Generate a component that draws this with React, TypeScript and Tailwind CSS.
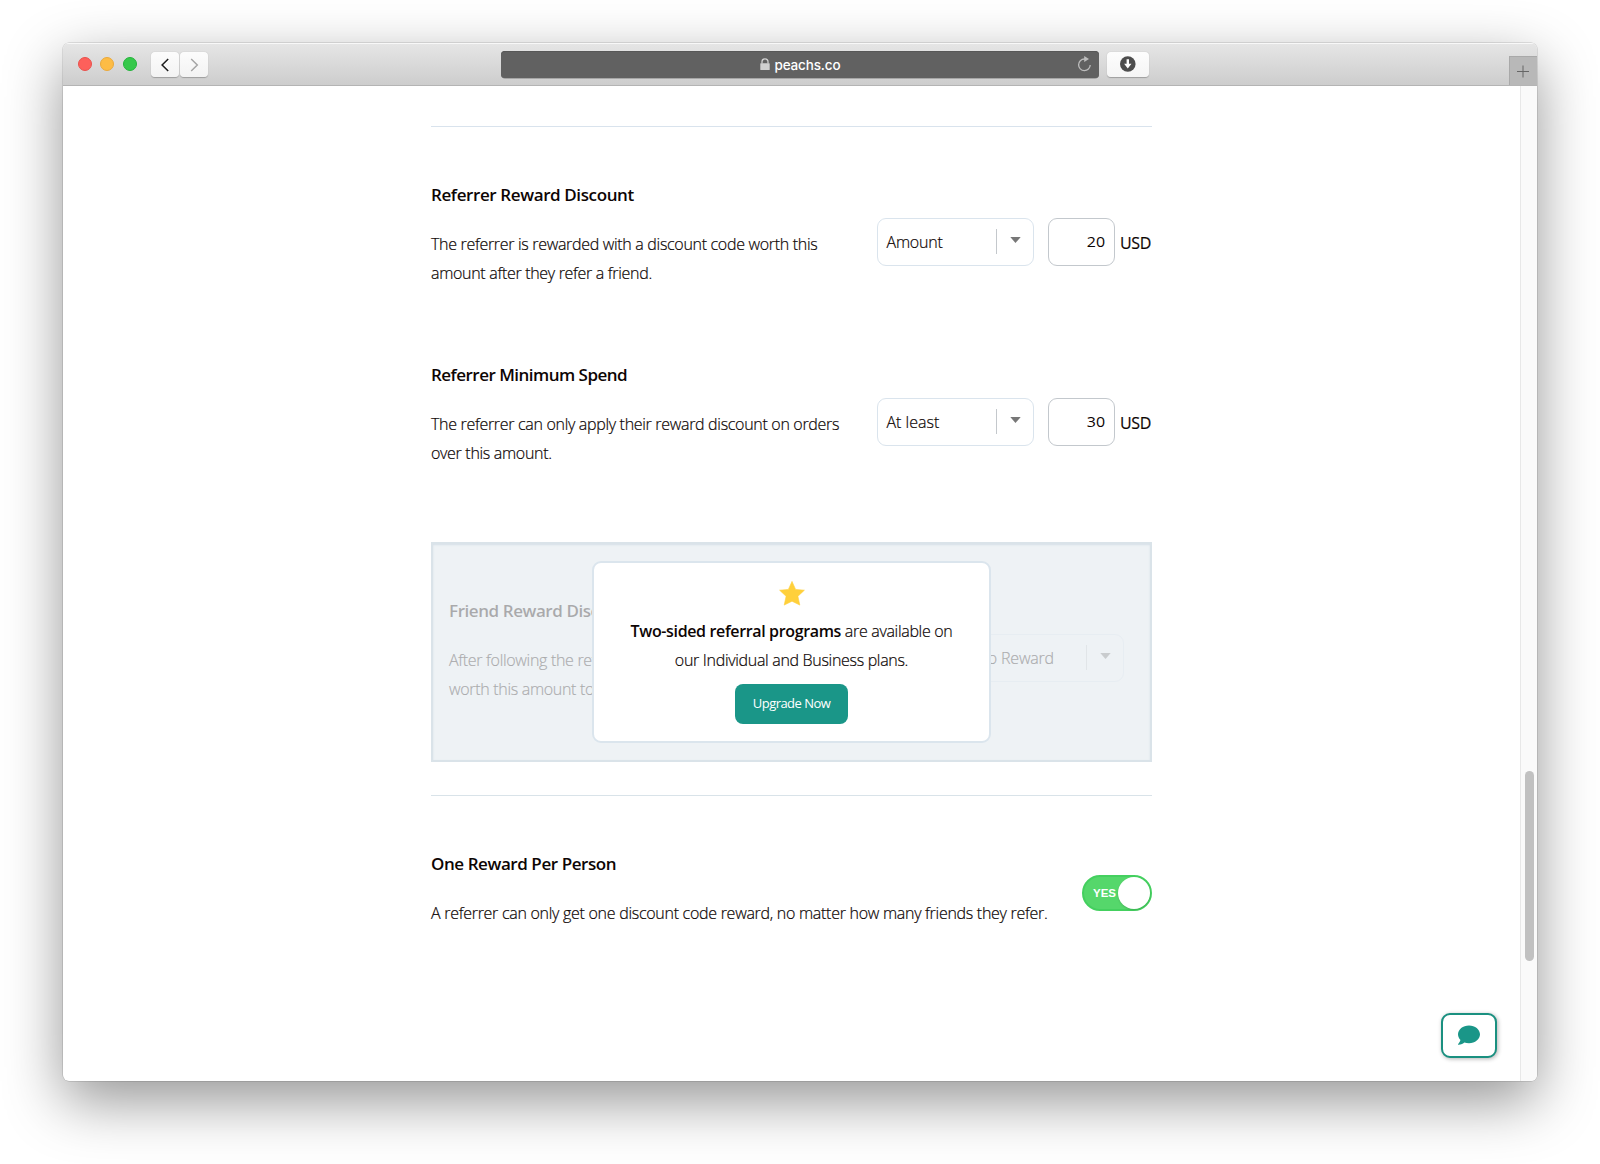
import type { ReactNode } from 'react';
import { FaComment } from 'react-icons/fa';

function SelectBox({ label, tracking }: { label: string; tracking: string }) {
  return (
    <div className="flex h-12 w-[157px] shrink-0 items-center rounded-[9px] border border-[#dae4ed] pl-[8.5px]">
      <span className={`flex-1 whitespace-nowrap pb-px text-[16px] font-light leading-6 [-webkit-text-stroke:0.2px] ${tracking}`}>{label}</span>
      <span className="mb-px h-[25px] w-px bg-[#c4c8cc]" />
      <svg className="mb-[4px] ml-[13.5px] mr-[12px]" width="11" height="6" viewBox="0 0 11 6">
        <path d="M0.3 0h10.4L5.5 6z" fill="#777" />
      </svg>
    </div>
  );
}

function Amount({ value }: { value: string }) {
  return (
    <div className="flex items-center">
      <div className="flex h-12 w-[67px] items-center justify-end rounded-[9px] border border-[#c3c8cd] pb-px pr-[9px] text-[14px]">
        <span className="inline-block origin-right scale-x-[1.14]">{value}</span>
      </div>
      <span className="ml-[5px] w-[32px] whitespace-nowrap pt-[2px] text-[16px] leading-6 tracking-[-0.3px] [-webkit-text-stroke:0.15px]">USD</span>
    </div>
  );
}

function Setting({ title, titleTracking, bodyTracking = 'tracking-[-0.31px]', lines, children }: {
  title: string;
  titleTracking: string;
  bodyTracking?: string;
  lines: string[];
  children: ReactNode;
}) {
  return (
    <div className="flex h-[108px] items-start justify-between">
      <div>
        <h2 className={`whitespace-nowrap text-[17px] font-semibold leading-[30px] ${titleTracking}`}>{title}</h2>
        <p className={`mt-[20px] whitespace-nowrap text-[16px] font-light leading-[29.4px] [-webkit-text-stroke:0.2px] ${bodyTracking}`}>
          {lines.map((line) => (
            <span key={line} className="block">{line}</span>
          ))}
        </p>
      </div>
      <div className="mt-[38px] flex gap-[14px]">{children}</div>
    </div>
  );
}

function Toolbar() {
  return (
    <div className="flex h-[43px] shrink-0 items-start border-b border-[#b4b4b4] bg-linear-to-b from-[#e6e6e6] to-[#cdcdcd] shadow-[inset_0_1px_0_#f8f8f8]">
      <div className="ml-[14.5px] mt-[14px] flex gap-[8.5px]">
        <span className="size-[14px] rounded-full border border-[#e9514c] bg-[#fd605b]" />
        <span className="size-[14px] rounded-full border border-[#eba93a] bg-[#fdbc45]" />
        <span className="size-[14px] rounded-full border border-[#22b43a] bg-[#36c84b]" />
      </div>
      <div className="ml-[14.5px] mt-[9px] flex gap-px">
        <span className="flex h-[25px] w-[28px] items-center justify-center rounded-[4px] bg-linear-to-b from-[#fcfcfc] to-[#f3f3f3] shadow-[0_0.5px_1px_rgba(0,0,0,0.25)]">
          <svg width="9" height="14" viewBox="0 0 9 14" fill="none" stroke="#1c1c1c" strokeWidth="1.5"><path d="M7.2 1L1.1 7l6.1 6" /></svg>
        </span>
        <span className="flex h-[25px] w-[28px] items-center justify-center rounded-[4px] bg-linear-to-b from-[#fcfcfc] to-[#f3f3f3] shadow-[0_0.5px_1px_rgba(0,0,0,0.25)]">
          <svg width="9" height="14" viewBox="0 0 9 14" fill="none" stroke="#a6a6a6" strokeWidth="1.5"><path d="M1.2 1l6.1 6-6.1 6" /></svg>
        </span>
      </div>
      <div className="ml-[293px] mt-[8px] flex h-[26.5px] w-[598px] items-center rounded-[4px] bg-[#616161] shadow-[inset_0_1px_0_#575757,0_0.5px_0.5px_rgba(0,0,0,0.4)]">
        <svg className="mb-px ml-[258.5px]" width="10" height="12" viewBox="0 0 10 12">
          <path d="M2 5.5V3.8a3 3 0 0 1 6 0v1.7" fill="none" stroke="#cfcfcf" strokeWidth="1.3" />
          <rect x="0.3" y="5.2" width="9.4" height="6.8" rx="0.6" fill="#cfcfcf" />
        </svg>
        <span className="ml-[5px] pt-px font-['Inter',sans-serif] text-[13.5px] font-medium leading-5 tracking-[-0.15px] text-white">peachs.co</span>
        <svg className="ml-auto mr-[7px]" width="15" height="16" viewBox="0 0 15 16">
          <path d="M8.2 3H7.4A5.8 5.8 0 1 0 13.2 8.9" fill="none" stroke="#bcbcbc" strokeWidth="1.3" />
          <path d="M7.2 0L12 3.1 7.2 6.1z" fill="#bcbcbc" />
        </svg>
      </div>
      <span className="ml-[8px] mt-[9px] flex h-[25px] w-[41.5px] items-center justify-center rounded-[4px] bg-linear-to-b from-[#fdfdfd] to-[#f5f5f5] shadow-[0_0.5px_1px_rgba(0,0,0,0.25)]">
        <svg className="mb-px" width="16" height="16" viewBox="0 0 16 16">
          <circle cx="7.8" cy="8" r="7.8" fill="#4d4d4d" />
          <path d="M6.6 3.2H9v4.6h2.5l-3.7 4.7-3.7-4.7h2.5z" fill="#fff" />
        </svg>
      </span>
      <span className="ml-auto mt-[13px] flex h-[29px] w-[28px] items-center justify-center border-l border-t border-[#a9a9a9] bg-[#b8b8b8]">
        <svg width="13" height="13" viewBox="0 0 13 13" stroke="#656565" strokeWidth="1"><path d="M6 0.5v12M0 6.5h12" /></svg>
      </span>
    </div>
  );
}

export default function App() {
  return (
    <div className="h-[1164px] w-[1600px] overflow-hidden bg-white pl-[63px] pt-[43px] font-['Open_Sans',sans-serif] text-[#0d0504]">
      <div className="flex h-[1038px] w-[1474px] flex-col overflow-hidden rounded-[6px] bg-white shadow-[0_0_0_0.5px_rgba(0,0,0,0.2),0_20px_58px_rgba(0,0,0,0.42)]">
        <Toolbar />
        <div className="relative flex flex-1 justify-between">
          <main className="ml-[368px] flex w-[721px] flex-col">
            <div className="mt-[40px] h-px bg-[#d9e3ed]" />
            <div className="mt-[53px]">
              <Setting title="Referrer Reward Discount" titleTracking="tracking-[-0.39px]" lines={['The referrer is rewarded with a discount code worth this', 'amount after they refer a friend.']}>
                <SelectBox label="Amount" tracking="tracking-[-0.2px]" />
                <Amount value="20" />
              </Setting>
            </div>
            <div className="mt-[72px]">
              <Setting title="Referrer Minimum Spend" titleTracking="tracking-[-0.52px]" lines={['The referrer can only apply their reward discount on orders', 'over this amount.']}>
                <SelectBox label="At least" tracking="tracking-[0px]" />
                <Amount value="30" />
              </Setting>
            </div>

            <div className="mt-[74px] flex h-[220px] border-2 border-[#dae3e9] bg-[#eef2f5] shadow-[inset_0_1px_2px_#d5dfe7]">
              <div className="relative flex-1 pl-[16px] pr-[26px] pt-[52px]">
                <div className="opacity-[0.3]">
                  <Setting title="Friend Reward Discount" titleTracking="tracking-[-0.43px]" lines={['After following the referral link,', 'worth this amount to spend.']}>
                    <SelectBox label="No Reward" tracking="tracking-[-0.2px]" />
                  </Setting>
                </div>
                <div className="absolute left-[159px] top-[17px] flex h-[182px] w-[399px] flex-col items-center rounded-[9px] border-2 border-[#dbe5ed] bg-white pt-[18px]">
                  <svg width="26" height="25" viewBox="0 0 26 25">
                    <path d="M13 0.4l3.6 8 8.8 0.8-6.5 6.1 1.9 8.8L13 20.2l-7.8 3.9 1.9-8.8L0.6 9.2l8.8-0.8z" fill="#ffd03b" stroke="#ffd03b" strokeWidth="0.6" strokeLinejoin="round" />
                  </svg>
                  <p className="mt-[11px] whitespace-nowrap text-center text-[16px] font-light leading-[29.4px] tracking-[-0.31px] [-webkit-text-stroke:0.2px]">
                    <strong className="font-semibold tracking-[-0.36px] [-webkit-text-stroke:0px]">Two-sided referral programs</strong> are available on
                    <br />
                    our Individual and Business plans.
                  </p>
                  <button className="mt-[8px] h-[40px] w-[113px] whitespace-nowrap rounded-[8px] bg-[#1a9688] pb-px text-[13px] tracking-[-0.54px] text-white">Upgrade Now</button>
                </div>
              </div>
            </div>

            <div className="mt-[33px] h-px bg-[#d9e3e9]" />
            <div className="mt-[53px]">
              <Setting title="One Reward Per Person" titleTracking="tracking-[-0.43px]" bodyTracking="tracking-[-0.28px]" lines={['A referrer can only get one discount code reward, no matter how many friends they refer.']}>
                <div className="-mt-[12px] flex h-[36px] w-[70px] items-center justify-between rounded-full border-2 border-[#44d05f] bg-[#55d76b] pl-[9px] font-['Liberation_Sans',sans-serif]">
                  <span className="pt-px text-[11.5px] font-bold text-white">YES</span>
                  <span className="size-[32px] rounded-full bg-white shadow-[0_1px_2px_rgba(0,0,0,0.15)]" />
                </div>
              </Setting>
            </div>
          </main>

          <div className="w-[17px] border-l border-[#e8e8e8] bg-[#fafafa] pl-[3.5px] pt-[685px]">
            <div className="h-[190px] w-[9px] rounded-full bg-[#c1c1c1]" />
          </div>

          <button className="absolute bottom-[23px] right-[40px] flex h-[45px] w-[56px] items-center justify-center rounded-[9px] border-2 border-[#1a9080] bg-white pb-px shadow-[1px_1px_4px_rgba(0,0,0,0.3)]">
            <FaComment className="text-[22px] text-[#1a9688]" />
          </button>
        </div>
      </div>
    </div>
  );
}
